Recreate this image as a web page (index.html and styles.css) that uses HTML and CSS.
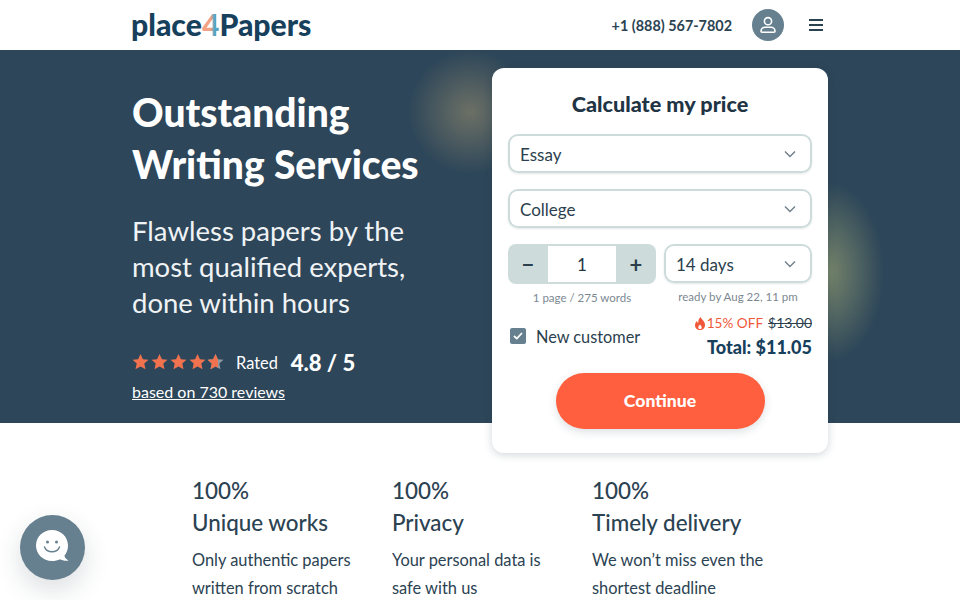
FILE: index.html
```html
<!DOCTYPE html>
<html lang="en">
<head>
    <meta charset="UTF-8">
    <meta name="viewport" content="width=device-width, initial-scale=1.0">
    <title>Place4Papers</title>
    <link rel="stylesheet" href="styles.css">
</head>
<body>
    <header class="topbar">
        <div class="wrap topbar-row">
            <a class="logo" href="#"><span>place</span><span class="logo-four">4</span><span>Papers</span></a>
            <div class="topbar-right">
                <a class="phone" href="#">+1 (888) 567-7802</a>
                <span class="avatar">
                    <svg width="18" height="18" viewBox="0 0 18 18" fill="none" stroke="#fff" stroke-width="1.6">
                        <circle cx="9" cy="5.2" r="3.6"/>
                        <path d="M3 16.2c-.6 0-1-.4-1-1 0-2.600 2-4 4-4h6c2 0 4 1.400 4 4 0 .6-.4 1-1 1z"/>
                    </svg>
                </span>
                <span class="burger"><i></i><i></i><i></i></span>
            </div>
        </div>
    </header>

    <section class="hero">
        <div class="wrap hero-row">
            <div class="hero-text">
                <h1>Outstanding<br>Writing Services</h1>
                <p class="lead">Flawless papers by the<br>most qualified experts,<br>done within hours</p>
                <div class="rating">
                    <svg class="stars" width="92" height="18" viewBox="0 0 92 18">
                        <defs>
                            <path id="star" d="M8.500 0l2.400 5.200 5.600.6-4.200 3.800 1.200 5.600-5-2.800-5 2.800 1.200-5.600L.5 5.800l5.600-.6z"/>
                            <clipPath id="part"><rect x="76" y="0" width="10" height="18"/></clipPath>
                        </defs>
                        <use href="#star" x="0" y="1" fill="#f0724f"/>
                        <use href="#star" x="19" y="1" fill="#f0724f"/>
                        <use href="#star" x="38" y="1" fill="#f0724f"/>
                        <use href="#star" x="57" y="1" fill="#f0724f"/>
                        <use href="#star" x="75" y="1" fill="#8b9aa5"/>
                        <g clip-path="url(#part)"><use href="#star" x="75" y="1" fill="#f0724f"/></g>
                    </svg>
                    <span class="rated">Rated</span>
                    <span class="score">4.8 / 5</span>
                </div>
                <a class="reviews" href="#">based on 730 reviews</a>
            </div>

            <form class="calc">
                <h2>Calculate my price</h2>
                <div class="select">Essay<svg class="chev" width="12" height="8" viewBox="0 0 12 8"><path d="M1 1.500l5 5 5-5"/></svg></div>
                <div class="select">College<svg class="chev" width="12" height="8" viewBox="0 0 12 8"><path d="M1 1.500l5 5 5-5"/></svg></div>
                <div class="calc-pair">
                    <div class="calc-col">
                        <div class="stepper">
                            <span class="step-btn">−</span>
                            <span class="step-val">1</span>
                            <span class="step-btn">+</span>
                        </div>
                        <div class="hint">1 page / 275 words</div>
                    </div>
                    <div class="calc-col">
                        <div class="select select-small">14 days<svg class="chev" width="12" height="8" viewBox="0 0 12 8"><path d="M1 1.500l5 5 5-5"/></svg></div>
                        <div class="hint">ready by Aug 22, 11 pm</div>
                    </div>
                </div>
                <div class="price-row">
                    <label class="check">
                        <span class="check-box">
                            <svg width="10" height="8" viewBox="0 0 10 8" fill="none" stroke="#fff" stroke-width="1.800"><path d="M1 4l2.800 2.600L9 1"/></svg>
                        </span>
                        New customer
                    </label>
                    <div class="price">
                        <div class="discount">
                            <svg width="10" height="13" viewBox="0 0 10 13" fill="#f0583a"><path d="M5.600 0c.4 2.200 4.400 4 4.400 8 0 3-2.200 5-5 5s-5-2-5-4.800c0-1.800.9-3.100 2-4.200.1 1.100.5 1.800 1.200 2.200C3 4 3.800 1.500 5.600 0zM5 7.500c-.9 1-1.700 1.700-1.700 2.900 0 1 .8 1.600 1.700 1.600s1.700-.6 1.700-1.600C6.700 9.200 5.800 8.500 5 7.500z"/></svg>
                            <span>15% OFF</span>
                            <s>$13.00</s>
                        </div>
                        <div class="total">Total: $11.05</div>
                    </div>
                </div>
                <button class="continue" type="button">Continue</button>
            </form>
        </div>
    </section>

    <section class="perks">
        <div class="perk">
            <h3>100%<br>Unique works</h3>
            <p>Only authentic papers written from scratch</p>
        </div>
        <div class="perk">
            <h3>100%<br>Privacy</h3>
            <p>Your personal data is safe with us</p>
        </div>
        <div class="perk">
            <h3>100%<br>Timely delivery</h3>
            <p>We won’t miss even the shortest deadline</p>
        </div>
    </section>

    <div class="chat">
        <svg width="37" height="37" viewBox="0 0 37 37">
            <path fill="#fff" d="M18 1c9 0 16 7 16 15.500 0 4-1.300 7.500-3.600 10.300.5 2.200 2 3.700 4.100 4.700-3 .5-6 0-8.300-1.300-2.500 1.200-5.200 1.800-8.200 1.800-9 0-16-7-16-15.500S9 1 18 1z"/>
            <circle cx="13.500" cy="13" r="1.500" fill="#66808f"/>
            <circle cx="22.500" cy="13" r="1.500" fill="#66808f"/>
            <path d="M10.500 18c1.500 3.500 4.500 4.800 7.500 4.800s6-1.300 7.500-4.800" fill="none" stroke="#66808f" stroke-width="1.500" stroke-linecap="round"/>
        </svg>
    </div>
</body>
</html>
```

FILE: styles.css
```css
html, body {
    margin: 0;
    height: 600px;
    overflow: hidden;
}
body {
    font-family: Lato, "Noto Sans", sans-serif;
    color: #1f3444;
    background-color: #fff;
}
a {
    color: inherit;
    text-decoration: none;
}
.wrap {
    width: 696px;
    margin: 0 auto;
}

/* top bar */
.topbar {
    height: 50px;
    background-color: #fff;
}
.topbar-row {
    height: 50px;
    display: flex;
    align-items: center;
    justify-content: space-between;
}
.logo {
    display: flex;
    margin: -3px 0 0 -1px;
    font-size: 30.2px;
    font-weight: 900;
    color: #17405c;
}
.logo-four {
    background: linear-gradient(90deg, #f4a184 50%, #4fa6c9 75%);
    -webkit-background-clip: text;
    background-clip: text;
    color: transparent;
}
.topbar-right {
    display: flex;
    align-items: center;
}
.phone {
    font-size: 14.4px;
    font-weight: 700;
    color: #2b4252;
    margin-right: 20px;
}
.avatar {
    width: 32px;
    height: 32px;
    border-radius: 50%;
    background-color: #66808f;
    display: flex;
    align-items: center;
    justify-content: center;
    margin-right: 25px;
}
.burger {
    width: 14px;
    margin-right: 5px;
    display: flex;
    flex-direction: column;
    gap: 3px;
}
.burger i {
    height: 2px;
    background-color: #2b4252;
}

/* hero */
.hero {
    height: 373px;
    background-color: #2d4659;
    background-image:
        radial-gradient(circle 62px at 470px 62px, rgba(150, 140, 110, 0.6), rgba(45, 70, 89, 0) 100%),
        radial-gradient(ellipse 56px 90px at 828px 222px, rgba(150, 160, 115, 0.7), rgba(45, 70, 89, 0) 100%);
    background-repeat: no-repeat;
}
.hero-row {
    display: flex;
    justify-content: space-between;
    align-items: flex-start;
}
.hero-text {
    color: #fff;
    padding-top: 36px;
}
h1 {
    margin: 0;
    font-size: 39px;
    line-height: 52px;
    font-weight: 900;
}
.lead {
    margin: 23px 0 0;
    font-size: 27.5px;
    line-height: 36px;
    font-weight: 400;
    color: #f0f3f5;
}
.rating {
    display: flex;
    align-items: center;
    margin-top: 28px;
    height: 26px;
}
.rated {
    font-size: 16.4px;
    margin-left: 12px;
}
.score {
    font-size: 22px;
    font-weight: 900;
    margin-left: 13px;
}
.reviews {
    display: inline-block;
    margin-top: 7px;
    font-size: 16px;
    text-decoration: underline;
}

/* price card */
.calc {
    box-sizing: border-box;
    width: 336px;
    height: 385px;
    margin-top: 18px;
    padding: 22px 16px 0;
    background-color: #fff;
    border-radius: 12px;
    box-shadow: 0 2px 8px rgba(30, 50, 65, 0.2);
}
.calc h2 {
    margin: 0 0 16px;
    font-size: 21.6px;
    line-height: 28px;
    font-weight: 900;
    text-align: center;
    color: #1f3444;
}
.select {
    box-sizing: border-box;
    height: 39px;
    margin-bottom: 16px;
    padding: 1px 14px 0 10px;
    display: flex;
    align-items: center;
    justify-content: space-between;
    font-size: 17px;
    color: #2b3f4e;
    border: 2px solid #cddcdb;
    border-radius: 10px;
    box-shadow: 0 1px 2px rgba(30, 50, 65, 0.12);
}
.chev {
    fill: none;
    stroke: #6f7f89;
    stroke-width: 1.400;
}
.calc-pair {
    display: flex;
    gap: 8px;
}
.calc-col {
    width: 148px;
}
.select-small {
    margin-bottom: 0;
}
.stepper {
    height: 40px;
    display: flex;
    background-color: #cddcdb;
    border-radius: 8px;
    padding: 2px 0;
    box-sizing: border-box;
}
.step-btn {
    width: 40px;
    display: flex;
    align-items: center;
    justify-content: center;
    font-size: 22px;
    font-weight: 700;
    color: #2b3f4e;
}
.step-val {
    flex: 1;
    display: flex;
    align-items: center;
    justify-content: center;
    background-color: #fff;
    font-size: 17px;
}
.hint {
    margin-top: 7px;
    font-size: 11.5px;
    line-height: 14px;
    color: #7b8891;
    text-align: center;
}
.price-row {
    display: flex;
    justify-content: space-between;
    align-items: center;
    margin-top: 9px;
}
.check {
    display: flex;
    align-items: center;
    gap: 10px;
    margin-left: 2px;
    padding-bottom: 2px;
    font-size: 16.3px;
    color: #2b3f4e;
}
.check-box {
    width: 16px;
    height: 16px;
    border-radius: 2px;
    background-color: #66808f;
    display: flex;
    align-items: center;
    justify-content: center;
}
.price {
    text-align: right;
}
.discount {
    display: flex;
    justify-content: flex-end;
    align-items: center;
    margin-bottom: 2px;
    font-size: 14px;
    line-height: 18px;
    color: #f0583a;
}
.discount span {
    margin-left: 2px;
    font-size: 13.6px;
}
.discount s {
    margin-left: 5px;
    color: #2b3f4e;
}
.total {
    font-size: 18px;
    line-height: 26px;
    font-weight: 900;
    color: #17405c;
}
.continue {
    display: block;
    width: 209px;
    height: 56px;
    margin: 13px auto 0;
    padding: 0 0 2px;
    border: none;
    border-radius: 28px;
    background-color: #ff5f3e;
    color: #fff;
    font-family: inherit;
    font-size: 17.6px;
    font-weight: 900;
    box-shadow: 0 3px 8px rgba(30, 50, 65, 0.15);
}

/* perks */
.perks {
    display: flex;
    padding: 52px 0 0 192px;
}
.perk {
    width: 200px;
}
.perk h3 {
    margin: 0;
    font-size: 22.4px;
    line-height: 32px;
    font-weight: 500;
    color: #2b4252;
}
.perk p {
    margin: 7px 24px 0 0;
    font-size: 16.4px;
    line-height: 28px;
    color: #2b4252;
}

/* chat bubble */
.chat {
    position: fixed;
    left: 20px;
    top: 515px;
    width: 65px;
    height: 65px;
    border-radius: 50%;
    background-color: #66808f;
    display: flex;
    align-items: center;
    justify-content: center;
    box-shadow: 0 10px 26px rgba(30, 50, 65, 0.16);
}
```
